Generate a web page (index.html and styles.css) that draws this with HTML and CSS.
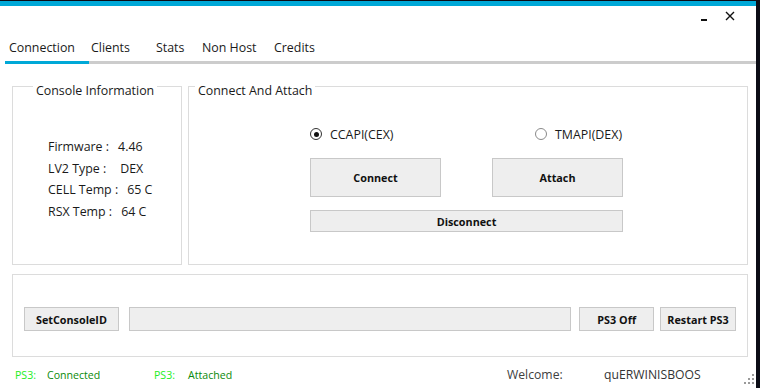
FILE: index.html
```html
<!DOCTYPE html>
<html lang="en">
<head>
  <meta charset="UTF-8" />
  <meta name="viewport" content="width=device-width, initial-scale=1.0"/>
  <title>PS3 Tool</title>
  <link rel="stylesheet" href="styles.css">
</head>
<body>
  <div class="window">
    <div class="titlebar">
      <span class="min-btn"></span>
      <svg class="close-btn" width="10" height="10" viewBox="0 0 10 10">
        <path d="M1 1 L9 9 M9 1 L1 9" stroke="#111" stroke-width="1.4" fill="none"/>
      </svg>
    </div>

    <div class="tabs">
      <div class="tab active">Connection</div>
      <div class="tab tab-clients">Clients</div>
      <div class="tab tab-stats">Stats</div>
      <div class="tab tab-nonhost">Non Host</div>
      <div class="tab">Credits</div>
    </div>

    <div class="content">
      <div class="top-row">
        <div class="group console-info">
          <div class="group-title">Console Information</div>
          <div class="info-list">
            <div class="info-row"><span>Firmware :</span><span>4.46</span></div>
            <div class="info-row wide"><span>LV2 Type :</span><span>DEX</span></div>
            <div class="info-row"><span>CELL Temp :</span><span>65 C</span></div>
            <div class="info-row"><span>RSX Temp :</span><span>64 C</span></div>
          </div>
        </div>

        <div class="group connect-attach">
          <div class="group-title">Connect And Attach</div>
          <div class="radio-row">
            <label class="radio first"><span class="circle checked"><span class="dot"></span></span>CCAPI(CEX)</label>
            <label class="radio"><span class="circle"></span>TMAPI(DEX)</label>
          </div>
          <div class="btn-row">
            <button class="btn big">Connect</button>
            <button class="btn big">Attach</button>
          </div>
          <button class="btn disconnect">Disconnect</button>
        </div>
      </div>

      <div class="group console-id">
        <button class="btn small setid">SetConsoleID</button>
        <div class="textbox"></div>
        <button class="btn small off">PS3 Off</button>
        <button class="btn small restart">Restart PS3</button>
      </div>

      <div class="status">
        <span class="ps3 first">PS3:</span>
        <span class="state first">Connected</span>
        <span class="ps3 second">PS3:</span>
        <span class="state">Attached</span>
        <span class="welcome">Welcome:</span>
        <span class="user">quERWINISBOOS</span>
        <svg class="grip" width="11" height="11" viewBox="0 0 11 11">
          <rect x="8" y="0" width="2" height="2" fill="#9a9a9a"/>
          <rect x="4" y="4" width="2" height="2" fill="#9a9a9a"/>
          <rect x="8" y="4" width="2" height="2" fill="#9a9a9a"/>
          <rect x="0" y="8" width="2" height="2" fill="#9a9a9a"/>
          <rect x="4" y="8" width="2" height="2" fill="#9a9a9a"/>
          <rect x="8" y="8" width="2" height="2" fill="#9a9a9a"/>
        </svg>
      </div>
    </div>
  </div>
</body>
</html>
```

FILE: styles.css
```css
body {
  margin: 0;
  background-color: #0c0d16;
  font-family: "Open Sans", "Noto Sans", sans-serif;
  font-size: 12.5px;
  color: #1a1a1a;
}

.window {
  width: 756px;
  height: 382px;
  margin-top: 1px;
  background: #fff;
  border-top: 5px solid #00a8d7;
}

/* Title bar controls */
.titlebar {
  height: 21px;
  padding-top: 6px;
  padding-right: 21px;
  display: flex;
  justify-content: flex-end;
  align-items: flex-start;
}

.min-btn {
  width: 6px;
  height: 2px;
  background: #111;
  margin-top: 7px;
  margin-right: 18px;
}

.close-btn {
  margin-top: -1px;
}

/* Tabs */
.tabs {
  display: flex;
  margin-left: 5px;
  border-bottom: 3px solid #cccccc;
  font-size: 12.4px;
}

.tab {
  line-height: 18px;
  padding: 6px 0 4px 2px;
}

.tab.active {
  width: 80px;
  padding-left: 4px;
  border-bottom: 3px solid #00a8d7;
  margin-bottom: -3px;
}

.tab-clients { width: 63px; }
.tab-stats { width: 44px; }
.tab-nonhost { width: 70px; }

/* Main content */
.content {
  padding: 22px 8px 0 12px;
}

.top-row {
  display: flex;
  gap: 6px;
  height: 179px;
}

.group {
  border: 1px solid #dcdcdc;
  box-sizing: border-box;
}

.group-title {
  width: fit-content;
  background: #fff;
  padding: 0 3px;
  margin-top: -4px;
  line-height: 16px;
  font-size: 12.4px;
}

.console-info {
  width: 170px;
}

.console-info .group-title {
  margin-left: 20px;
}

.connect-attach {
  flex: 1;
  padding-left: 121px;
}

.connect-attach .group-title {
  margin-left: -115px;
}

.info-list {
  padding: 37px 0 0 35px;
  font-size: 12.4px;
}

.info-row {
  display: flex;
  gap: 9px;
  line-height: 21.7px;
}

.info-row.wide {
  gap: 14px;
}

/* Radio buttons */
.radio-row {
  display: flex;
  margin-top: 27px;
  height: 16px;
  align-items: center;
  font-size: 12.4px;
}

.radio {
  display: flex;
  align-items: center;
}

.radio.first {
  width: 225px;
}

.circle {
  width: 10px;
  height: 10px;
  border: 1px solid #8a8a8a;
  border-radius: 50%;
  margin-right: 8px;
  display: flex;
  justify-content: center;
  align-items: center;
}

.circle.checked {
  border-color: #333;
}

.dot {
  width: 5px;
  height: 5px;
  border-radius: 50%;
  background: #111;
}

/* Buttons */
.btn {
  font-family: "Open Sans", "Noto Sans", sans-serif;
  font-weight: bold;
  font-size: 10.8px;
  color: #111;
  background: #eeeeee;
  border: 1px solid #c8c8c8;
  padding: 0;
  box-sizing: border-box;
}

.btn-row {
  display: flex;
  gap: 51px;
  margin-top: 16px;
}

.btn.big {
  width: 131px;
  height: 39px;
}

.btn.disconnect {
  width: 313px;
  height: 22px;
  margin-top: 13px;
}

.console-id {
  height: 83px;
  margin-top: 9px;
  padding: 32px 11px 0 11px;
  display: flex;
  align-items: flex-start;
}

.btn.small {
  height: 24px;
}

.setid { width: 95px; }
.off { width: 75px; margin-left: 8px; }
.restart { width: 76px; margin-left: 6px; }

.textbox {
  width: 443px;
  height: 24px;
  margin-left: 10px;
  background: #eeeeee;
  border: 1px solid #c8c8c8;
  box-sizing: border-box;
}

/* Status strip */
.status {
  display: flex;
  align-items: center;
  margin: 7px -7px 0 3px;
  line-height: 16px;
  font-size: 10.6px;
}

.ps3 {
  color: #22ee22;
}

.ps3.first { width: 32px; }
.ps3.second { width: 34px; }
.state { color: #0a8a0a; }
.state.first { width: 107px; }

.welcome {
  margin-left: auto;
  width: 97px;
  color: #404040;
  font-size: 12.2px;
}

.user {
  width: 140px;
  color: #333;
  font-size: 12.2px;
}

.grip {
  margin-top: 10px;
}
```
